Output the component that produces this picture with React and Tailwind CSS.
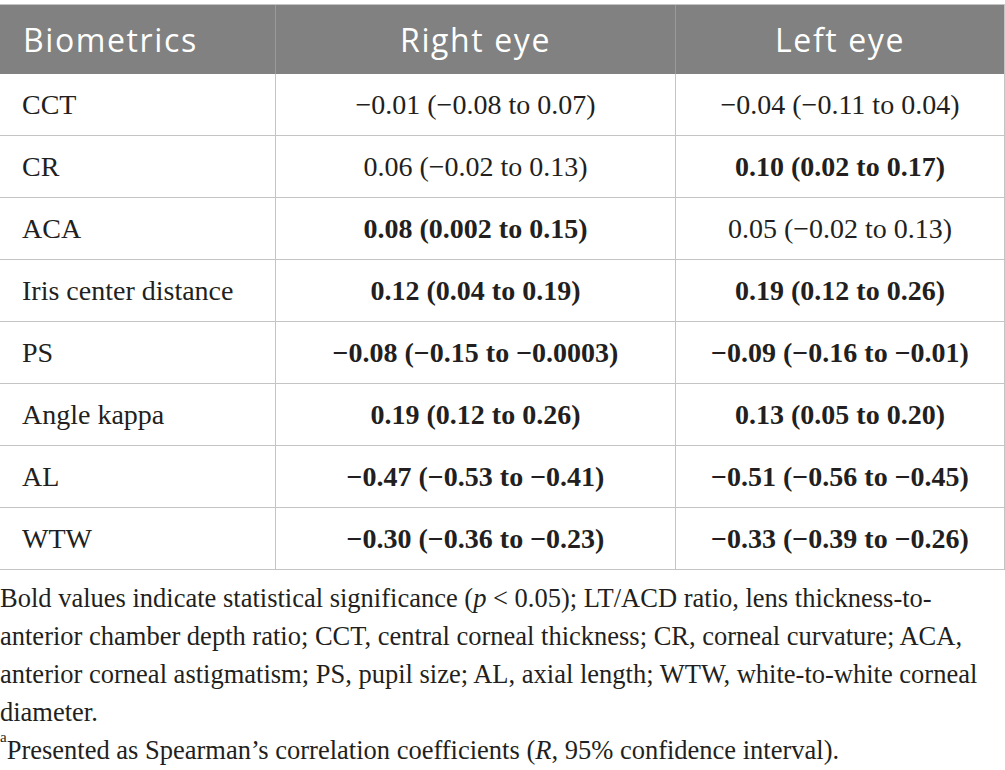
import React from "react";

const rows = [
  ["CCT", ["−0.01 (−0.08 to 0.07)", false], ["−0.04 (−0.11 to 0.04)", false]],
  ["CR", ["0.06 (−0.02 to 0.13)", false], ["0.10 (0.02 to 0.17)", true]],
  ["ACA", ["0.08 (0.002 to 0.15)", true], ["0.05 (−0.02 to 0.13)", false]],
  ["Iris center distance", ["0.12 (0.04 to 0.19)", true], ["0.19 (0.12 to 0.26)", true]],
  ["PS", ["−0.08 (−0.15 to −0.0003)", true], ["−0.09 (−0.16 to −0.01)", true]],
  ["Angle kappa", ["0.19 (0.12 to 0.26)", true], ["0.13 (0.05 to 0.20)", true]],
  ["AL", ["−0.47 (−0.53 to −0.41)", true], ["−0.51 (−0.56 to −0.45)", true]],
  ["WTW", ["−0.30 (−0.36 to −0.23)", true], ["−0.33 (−0.39 to −0.26)", true]],
];

const serif = "font-['Liberation_Serif','Times_New_Roman',serif]";

export default function App() {
  return (
    <div className={`w-[1005px] bg-white text-[#231f20] ${serif}`}>
      <div className="pt-[4px]">
        <div className="grid grid-cols-[276px_400px_329px] border-t border-[#c4c4c4]">
          <div className="h-[69px] bg-[#808180] border-r border-[#9a9a9a] flex items-center pl-[23px] text-white text-[32px] tracking-[0.05em] font-['Open_Sans',sans-serif]">
            Biometrics
          </div>
          <div className="h-[69px] bg-[#808180] border-r border-[#9a9a9a] flex items-center justify-center text-white text-[32px] tracking-[0.05em] font-['Open_Sans',sans-serif]">
            Right eye
          </div>
          <div className="h-[69px] bg-[#808180] border-r border-[#c4c4c4] flex items-center justify-center text-white text-[32px] tracking-[0.05em] font-['Open_Sans',sans-serif]">
            Left eye
          </div>
          {rows.map(([label, r, l]) => (
            <React.Fragment key={label}>
              <div className="h-[62px] border-b border-r border-[#c4c4c4] flex items-center pl-[22px] text-[28px]">
                {label}
              </div>
              <div className={`h-[62px] border-b border-r border-[#c4c4c4] flex items-center justify-center text-[28px] ${r[1] ? "font-bold" : ""}`}>
                {r[0]}
              </div>
              <div className={`h-[62px] border-b border-r border-[#c4c4c4] flex items-center justify-center text-[28px] ${l[1] ? "font-bold" : ""}`}>
                {l[0]}
              </div>
            </React.Fragment>
          ))}
        </div>
      </div>
      <div className="pt-[9px] text-[26.5px] leading-[38px]">
        <p>
          Bold values indicate statistical significance (<i>p</i> &lt; 0.05); LT/ACD ratio, lens thickness-to-
          <br />
          anterior chamber depth ratio; CCT, central corneal thickness; CR, corneal curvature; ACA,
          <br />
          anterior corneal astigmatism; PS, pupil size; AL, axial length; WTW, white-to-white corneal
          <br />
          diameter.
        </p>
        <p>
          <sup className="text-[15px] align-[10px]">a</sup>Presented as Spearman’s correlation coefficients (<i>R</i>, 95% confidence interval).
        </p>
      </div>
    </div>
  );
}
